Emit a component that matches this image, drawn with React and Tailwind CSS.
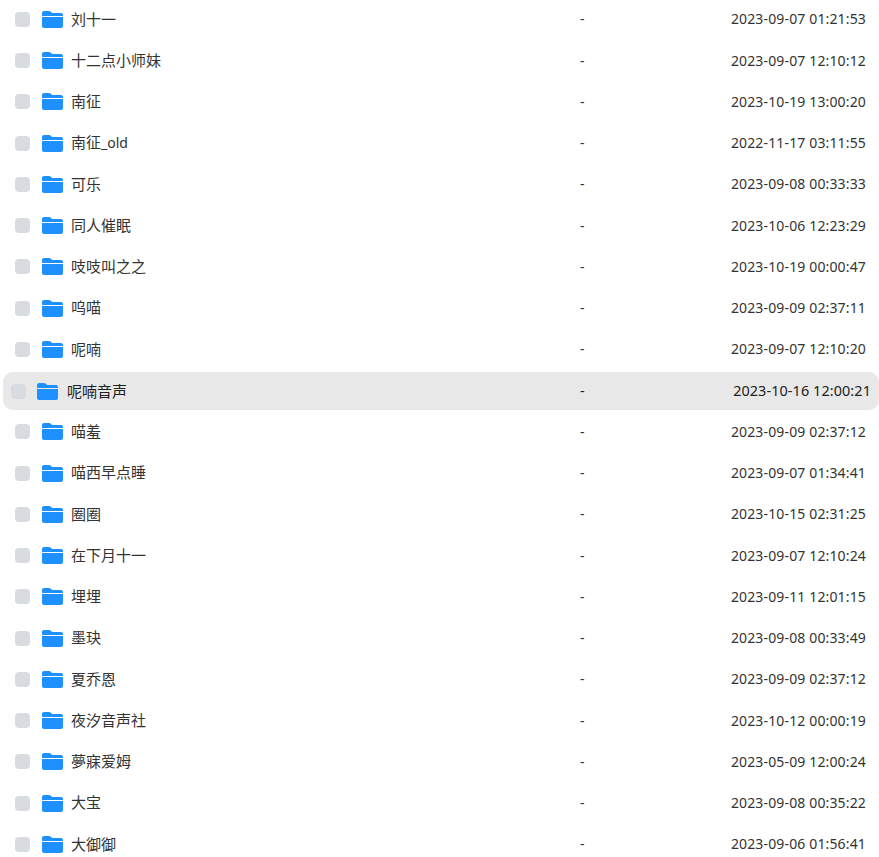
const rows = [
  ["刘十一", "2023-09-07 01:21:53"],
  ["十二点小师妹", "2023-09-07 12:10:12"],
  ["南征", "2023-10-19 13:00:20"],
  ["南征", "2022-11-17 03:11:55", false, "_old"],
  ["可乐", "2023-09-08 00:33:33"],
  ["同人催眠", "2023-10-06 12:23:29"],
  ["吱吱叫之之", "2023-10-19 00:00:47"],
  ["呜喵", "2023-09-09 02:37:11"],
  ["呢喃", "2023-09-07 12:10:20"],
  ["呢喃音声", "2023-10-16 12:00:21", true],
  ["喵羞", "2023-09-09 02:37:12"],
  ["喵西早点睡", "2023-09-07 01:34:41"],
  ["圈圈", "2023-10-15 02:31:25"],
  ["在下月十一", "2023-09-07 12:10:24"],
  ["埋埋", "2023-09-11 12:01:15"],
  ["墨玦", "2023-09-08 00:33:49"],
  ["夏乔恩", "2023-09-09 02:37:12"],
  ["夜汐音声社", "2023-10-12 00:00:19"],
  ["夢寐爱姆", "2023-05-09 12:00:24"],
  ["大宝", "2023-09-08 00:35:22"],
  ["大御御", "2023-09-06 01:56:41"],
];

const FolderIcon = () => (
  <svg width="21" height="17" viewBox="0 0 21 17" className="shrink-0">
    <path d="M0 2C0 .9.9 0 2 0h5c.6 0 1.1.2 1.5.6L10.2 2H19c1.100 0 2 .9 2 2v1H0z" fill="#1e90ff" />
    <path d="M0 6h21v9c0 1.100-.9 2-2 2H2c-1.100 0-2-.9-2-2z" fill="#1e90ff" />
  </svg>
);

const Row = ({ name, date, active, suffix }) => (
  <div
    className={
      active
        ? "mt-[2.1px] mb-[1.15px] ml-[3px] flex h-[38px] items-center rounded-[10px] bg-[#e8e8e8] pl-[8px] pr-[8px] text-[14.4px] text-[#222]"
        : "flex h-[41.25px] items-center pl-[15px] pr-[13px] text-sm text-[#333]"
    }
  >
    <div className="h-[15px] w-[15px] shrink-0 rounded-[4px] bg-[#d8dce1]" />
    <div
      className={
        active
          ? "ml-[11px] flex w-[539px] items-center gap-[9px]"
          : "ml-[12px] flex w-[538px] items-center gap-2"
      }
    >
      <FolderIcon />
      <span className="text-[15px]">
        {name}
        {suffix && <span className="text-sm">{suffix}</span>}
      </span>
    </div>
    <span className={active ? "ml-[4px]" : ""}>-</span>
    <span className={active ? "ml-auto tracking-[0.1px]" : "ml-auto tracking-[0.15px]"}>{date}</span>
  </div>
);

export default function App() {
  return (
    <div className="h-[857px] overflow-hidden bg-white font-['Noto_Sans','Noto_Sans_CJK_SC',sans-serif]">
      <div className="-mt-[1.3px]">
        {rows.map(([name, date, active, suffix]) => (
          <Row key={date + name} name={name} date={date} active={active} suffix={suffix} />
        ))}
      </div>
    </div>
  );
}
